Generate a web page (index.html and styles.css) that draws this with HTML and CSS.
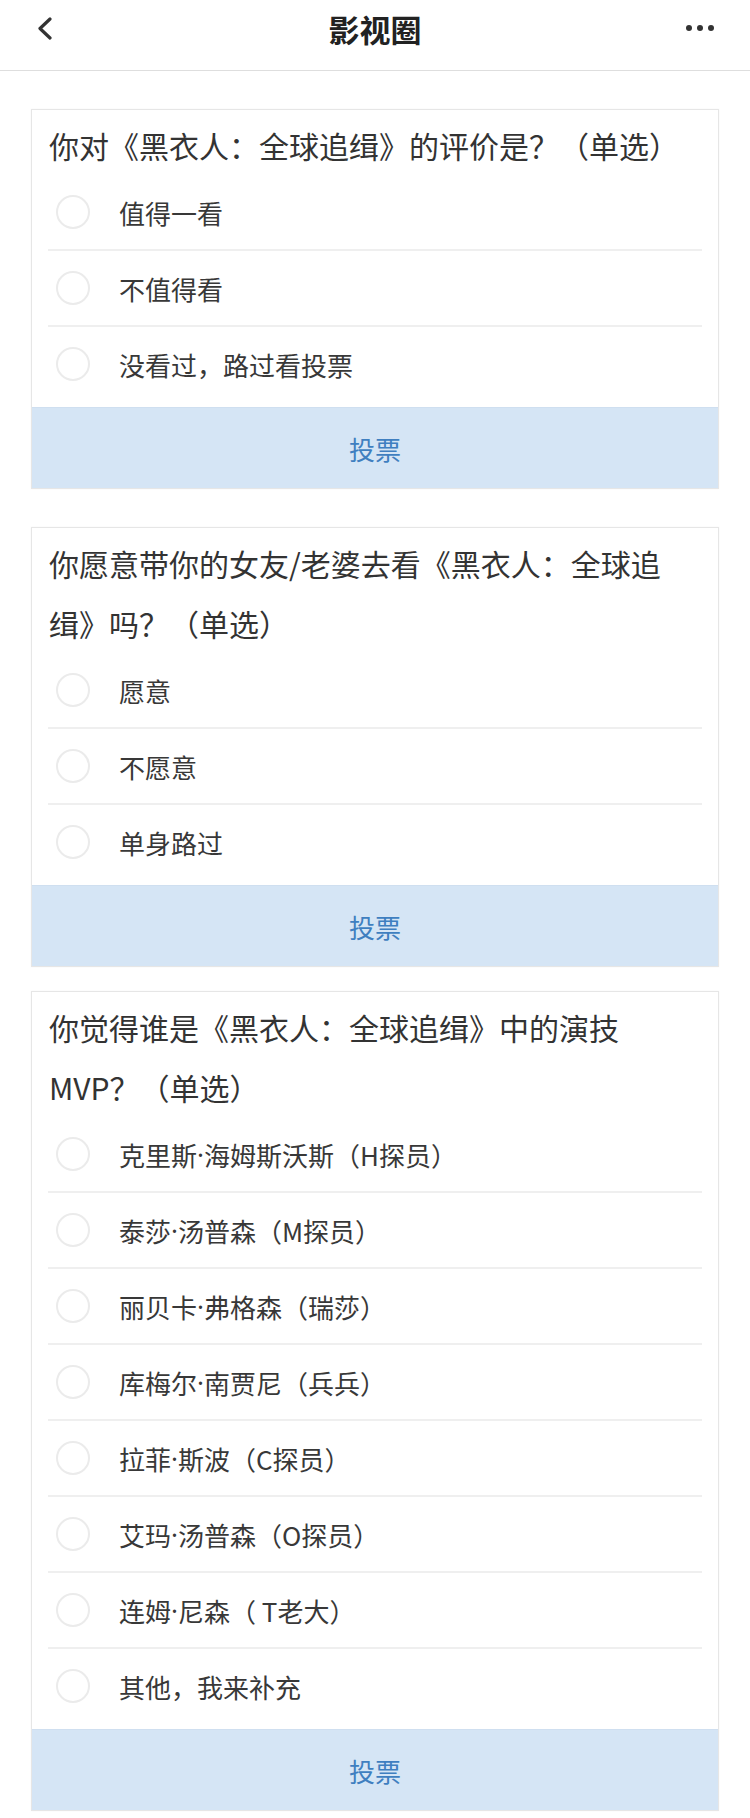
FILE: index.html
```html
<!DOCTYPE html>
<html lang="zh-CN">
<head>
	<meta charset="UTF-8">
	<title>影视圈</title>
	<link rel="stylesheet" href="styles.css">
</head>
<body>
	<div id="header">
		<a class="back" href="javascript:;">
			<svg width="17" height="23" viewBox="0 0 17 23"><path d="M14 2 L4 11.5 L14 21" fill="none" stroke="#333" stroke-width="3.2" stroke-linecap="round" stroke-linejoin="round"/></svg>
		</a>
		<h1 class="title">影视圈</h1>
		<a class="more" href="javascript:;"><i></i><i></i><i></i></a>
	</div>

	<div id="main">
		<!-- 第一题 -->
		<div class="vote-card">
			<p class="question">你对《黑衣人：全球追缉》的评价是？（单选）</p>
			<ul class="options">
				<li><span class="radio"></span>值得一看</li>
				<li><span class="radio"></span>不值得看</li>
				<li><span class="radio"></span>没看过，路过看投票</li>
			</ul>
			<a class="vote-btn" href="javascript:;">投票</a>
		</div>

		<!-- 第二题 -->
		<div class="vote-card">
			<p class="question">你愿意带你的女友/老婆去看《黑衣人：全球追缉》吗？（单选）</p>
			<ul class="options">
				<li><span class="radio"></span>愿意</li>
				<li><span class="radio"></span>不愿意</li>
				<li><span class="radio"></span>单身路过</li>
			</ul>
			<a class="vote-btn" href="javascript:;">投票</a>
		</div>

		<!-- 第三题 -->
		<div class="vote-card vote-card-mvp">
			<p class="question">你觉得谁是《黑衣人：全球追缉》中的演技MVP？（单选）</p>
			<ul class="options">
				<li><span class="radio"></span>克里斯<span class="dot">·</span>海姆斯沃斯（H探员）</li>
				<li><span class="radio"></span>泰莎<span class="dot">·</span>汤普森（M探员）</li>
				<li><span class="radio"></span>丽贝卡<span class="dot">·</span>弗格森（瑞莎）</li>
				<li><span class="radio"></span>库梅尔<span class="dot">·</span>南贾尼（兵兵）</li>
				<li><span class="radio"></span>拉菲<span class="dot">·</span>斯波（C探员）</li>
				<li><span class="radio"></span>艾玛<span class="dot">·</span>汤普森（O探员）</li>
				<li><span class="radio"></span>连姆<span class="dot">·</span>尼森（ T老大）</li>
				<li><span class="radio"></span>其他，我来补充</li>
			</ul>
			<a class="vote-btn" href="javascript:;">投票</a>
		</div>
	</div>
</body>
</html>
```

FILE: styles.css
```css
body{
	margin: 0;
	background: #fff;
	color: #333;
	font-family: "Noto Sans CJK SC", "Noto Sans", sans-serif;
}
#header{
	display: grid;
	grid-template-columns: 1fr auto 1fr;
	align-items: center;
	height: 56px;
	padding: 0 36px 14px 36px;
	border-bottom: 1px solid #dedede;
}
.back{
	display: flex;
	justify-self: start;
}
.title{
	margin: 0;
	font-size: 31px;
	font-weight: bold;
	color: #222;
	line-height: 1;
}
.more{
	display: flex;
	justify-self: end;
	gap: 5px;
}
.more i{
	width: 6px;
	height: 6px;
	border-radius: 50%;
	background-color: #333;
}

#main{
	padding: 0 31px 20px;
}
.vote-card{
	margin-top: 38px;
	border: 1px solid #e6e6e6;
	box-shadow: 0 0 2px rgba(0, 0, 0, .04);
}
.vote-card-mvp{
	margin-top: 24px;
}
.question{
	margin: 0;
	padding: 5px 17px 0;
	font-size: 30px;
	line-height: 60px;
	color: #333;
}
.options{
	list-style: none;
	margin: 0 16px;
	padding: 0 0 6px;
}
.options li{
	display: flex;
	align-items: center;
	height: 74px;
	font-size: 26px;
	color: #383838;
	white-space: pre;
	border-bottom: 2px solid #efefef;
}
.options li:last-child{
	border-bottom: none;
}
.dot{
	font-family: "Noto Sans", sans-serif;
}
.radio{
	flex: none;
	width: 30px;
	height: 30px;
	margin: 0 29px 0 8px;
	border: 2px solid #ebebeb;
	border-radius: 50%;
}
.vote-btn{
	display: flex;
	align-items: center;
	justify-content: center;
	height: 80px;
	font-size: 26px;
	color: #3f7fc0;
	text-decoration: none;
	background-color: #d5e5f5;
	border-top: 1px solid #cfdff0;
}
```
